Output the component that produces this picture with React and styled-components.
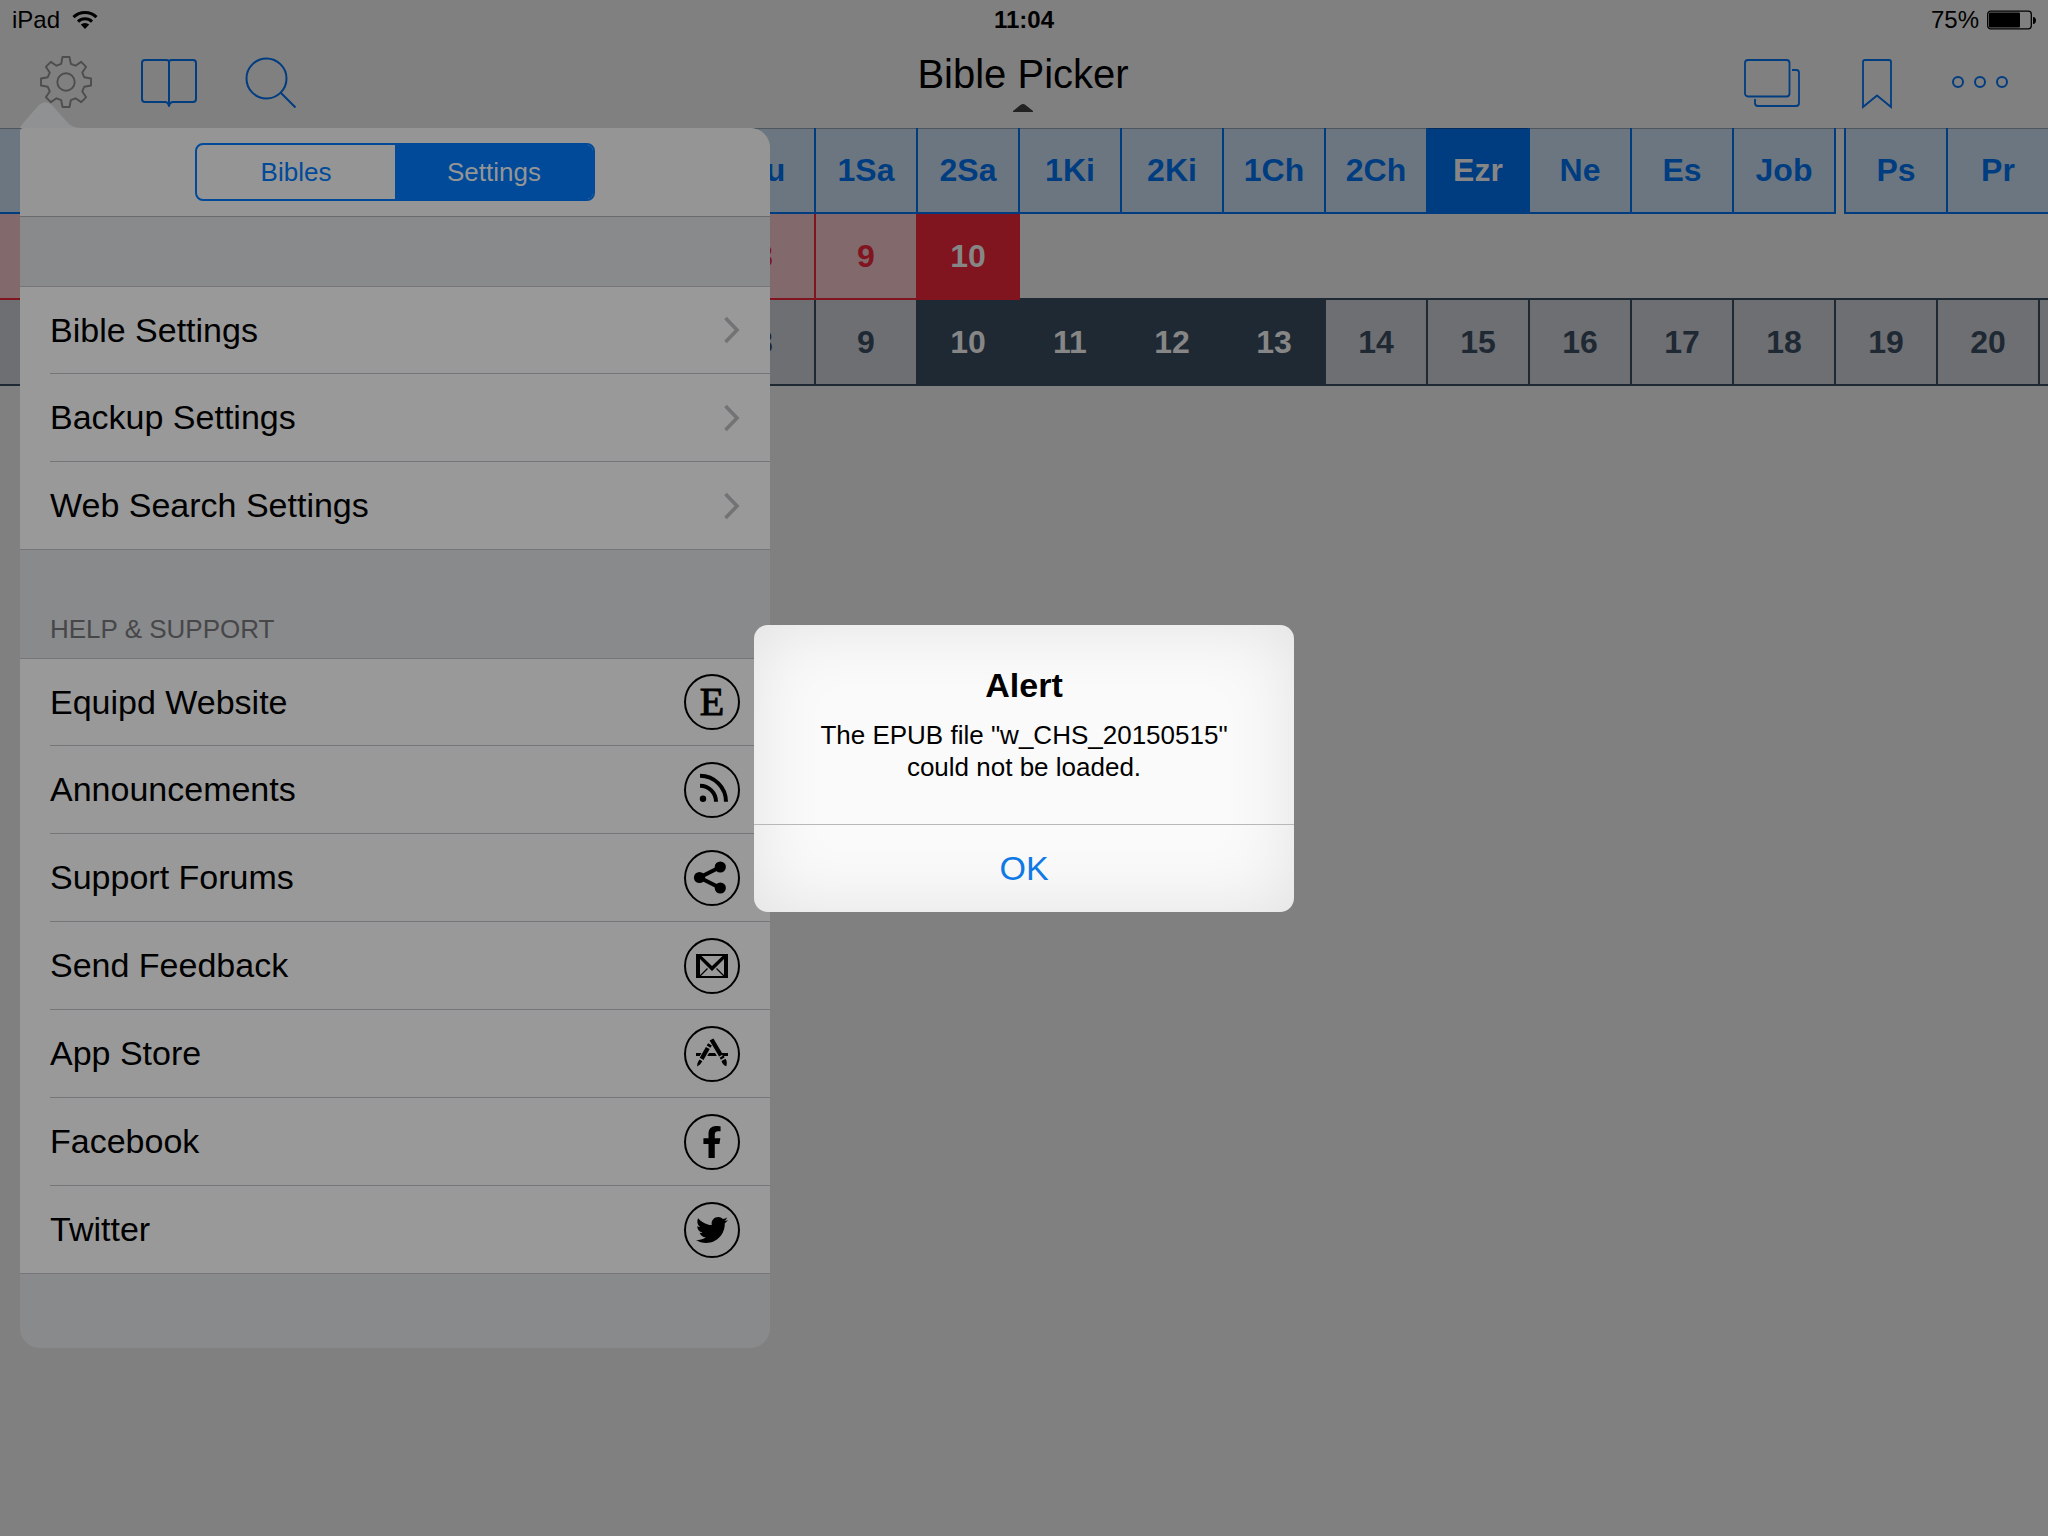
import React from 'react'
import styled, { createGlobalStyle } from 'styled-components'
import { FaFacebookF, FaTwitter } from 'react-icons/fa'

const GlobalStyle=createGlobalStyle`
* {
box-sizing: border-box;
}
body {
margin: 0;
background: #808080;
color: #000;
font-family: "Liberation Sans", Arial, Helvetica, sans-serif;
}
button {
margin: 0;
padding: 0;
border: 0;
background: none;
color: inherit;
font: inherit;
cursor: pointer;
}
`
const Page=styled.div`
position: relative;
min-height: 100vh;
overflow: hidden;
`
const StatusBar=styled.header`
display: grid;
grid-template-columns: 1fr auto 1fr;
align-items: center;
height: 40px;
padding: 0 12px;
font-size: 24px;
`
const StatusSide=styled.div`
display: flex;
align-items: center;
justify-content: ${p => p.$end ? 'flex-end' : 'flex-start'};
gap: ${p => p.$end ? '8px' : '12px'};
`
const Clock=styled.span`
font-weight: bold;
`
const NavBar=styled.nav`
display: grid;
grid-template-columns: 1fr auto 1fr;
align-items: center;
height: 88px;
padding: 0 40px 0 38px;
`
const NavGroup=styled.div`
display: flex;
gap: 47px;
justify-content: ${p => p.$end ? 'flex-end' : 'flex-start'};
`
const NavButton=styled.button`
width: 56px;
height: 56px;
color: ${p => p.$muted ? '#4d4d4d' : '#003c80'};
svg {
display: block;
overflow: visible;
}
`
const TitleButton=styled.button`
display: flex;
flex-direction: column;
align-items: center;
gap: 8px;
align-self: start;
padding-top: 12px;
`
const Title=styled.span`
font-size: 40px;
line-height: 44px;
`

// colours of the three picker rows
const tones={
    book: { fill: '#6c7680', ink: '#003c80' },
    chapter: { fill: '#826a6c', ink: '#80141f' },
    verse: { fill: '#6e6f73', ink: '#1f2933' },
}
const PickerRow=styled.div`
display: flex;
height: 86px;
overflow: hidden;
box-shadow: ${p => p.$top ? 'inset 0 1px #55575c' : 'none'};
`
const CellGroup=styled.div`
display: flex;
flex: none;
margin-right: ${p => p.$gap ? '8px' : '0'};
border-right: ${p => p.$closed ? `2px solid ${tones[p.$tone].ink}` : '0'};
`
const Cell=styled.button`
flex: none;
width: ${p => p.$first ? '100px' : '102px'};
height: 86px;
border-left: ${p => p.$first ? '0' : '2px'} solid ${p => tones[p.$tone].ink};
border-bottom: 2px solid ${p => tones[p.$tone].ink};
background: ${p => p.$on ? tones[p.$tone].ink : tones[p.$tone].fill};
color: ${p => p.$on ? '#868686' : tones[p.$tone].ink};
box-shadow: ${p => p.$tone === 'book' ? 'inset 0 1px rgba(0, 0, 0, 0.28)' : 'none'};
font-size: 32px;
font-weight: bold;
text-align: center;
`
const Filler=styled.div`
flex: 1;
border-bottom: 2px solid #1f2933;
`

const Popover=styled.aside`
position: absolute;
top: 102px;
left: 20px;
width: 750px;
`
const Arrow=styled.svg`
display: block;
`
const Panel=styled.div`
overflow: hidden;
border-radius: 4px 20px 20px 20px;
background: #898a8c;
`
const PanelHead=styled.div`
display: flex;
justify-content: center;
align-items: center;
height: 89px;
border-bottom: 1px solid #6a6a6b;
background: #959595;
`
const Segments=styled.div`
display: flex;
width: 400px;
height: 58px;
border: 2px solid #004a99;
border-radius: 8px;
overflow: hidden;
`
const Segment=styled.button`
flex: 1;
background: ${p => p.$on ? '#004a99' : 'transparent'};
color: ${p => p.$on ? '#959595' : '#004a99'};
font-size: 26px;
`
const Spacer=styled.div`
height: ${p => p.$size}px;
`
const GroupLabel=styled.h2`
display: flex;
align-items: flex-end;
height: 108px;
margin: 0;
padding: 0 30px 14px;
color: #47474a;
font-size: 26px;
font-weight: normal;
line-height: 30px;
`
const List=styled.ul`
margin: 0;
padding: 0;
list-style: none;
border-top: 1px solid #76767a;
border-bottom: 1px solid #76767a;
background: #999;
`
const Item=styled.li`
height: 88px;
margin-left: 30px;
border-bottom: 1px solid #76767a;
&:first-child {
height: 87px;
}
&:last-child {
height: 87px;
border-bottom: 0;
}
`
const ItemLink=styled.a`
display: flex;
align-items: center;
justify-content: space-between;
height: 100%;
padding-right: 30px;
color: #000;
font-size: 34px;
text-decoration: none;
`
const Ring=styled.span`
display: flex;
align-items: center;
justify-content: center;
width: 56px;
height: 56px;
border: 2px solid #000;
border-radius: 50%;
svg {
flex: none;
}
`
const Monogram=styled.span`
font-family: "Liberation Serif", "Times New Roman", serif;
font-size: 40px;
line-height: 52px;
-webkit-text-stroke: 1px #000;
`

const Backdrop=styled.div`
position: fixed;
inset: 0;
display: flex;
align-items: center;
justify-content: center;
`
const AlertBox=styled.div`
width: 540px;
border-radius: 14px;
background: #fafafa;
box-shadow: inset 0 0 70px rgba(0, 0, 0, 0.1);
text-align: center;
`
const AlertText=styled.div`
padding: 40px 48px 41px;
border-bottom: 1px solid #b8b8ba;
`
const AlertTitle=styled.h1`
margin: 0 0 14px;
font-size: 34px;
line-height: 40px;
`
const AlertMessage=styled.p`
margin: 0;
font-size: 26px;
line-height: 32px;
`
const AlertButton=styled.button`
width: 100%;
height: 87px;
color: #0f7ae5;
font-size: 34px;
`

// eight teeth, one every 45 degrees
const gearPath=() => {
    const pts=[]
    for (let i=0; i < 8; i++) {
        const a=i * Math.PI / 4
        const tooth=[[-4.8, -18.2], [-3.5, -25], [3.5, -25], [4.8, -18.2]]
        tooth.forEach(([x, y]) => {
            const px=28 + x * Math.cos(a) - y * Math.sin(a)
            const py=26 + x * Math.sin(a) + y * Math.cos(a)
            pts.push(`${px.toFixed(2)} ${py.toFixed(2)}`)
        })
    }
    return `M${pts.join('L')}Z`
}

const Line=({children, width=2}) => (
    <svg width="56" height="56" viewBox="0 0 56 56" fill="none" stroke="currentColor" strokeWidth={width} strokeLinejoin="round" aria-hidden="true">
        {children}
    </svg>
)
const Glyph=({children}) => (
    <svg width="56" height="56" viewBox="0 0 56 56" aria-hidden="true">{children}</svg>
)

const WifiIcon=() => (
    <svg width="26" height="20" viewBox="0 0 26 20" fill="none" stroke="#000" strokeWidth="3" aria-hidden="true">
        <path d="M1.5 7.2a16.5 16.5 0 0 1 23 0" />
        <path d="M6 11.6a10 10 0 0 1 14 0" />
        <path d="M8.8 14.6a6 6 0 0 1 8.4 0L13 19z" fill="#000" stroke="none" />
    </svg>
)
const BatteryIcon=() => (
    <svg width="49" height="20" viewBox="0 0 49 20" aria-hidden="true">
        <rect x="0.7" y="1.2" width="43.6" height="17.6" rx="3" fill="none" stroke="#000" strokeWidth="1.3" />
        <rect x="2" y="2.6" width="31" height="14.8" rx="1" />
        <path d="M46 7c4 0 4 7 0 7z" />
    </svg>
)
const Chevron=() => (
    <svg width="16" height="28" viewBox="0 0 16 28" fill="none" stroke="#737375" strokeWidth="3.6" aria-hidden="true">
        <path d="M1.5 2L13 14L1.5 26" />
    </svg>
)
const RssIcon=() => (
    <Glyph>
        <circle cx="19" cy="36.7" r="3.2" />
        <g fill="none" stroke="#000" strokeWidth="4">
            <path d="M16 23.7a16 16 0 0 1 16 16" />
            <path d="M16 13.7a26 26 0 0 1 26 26" />
        </g>
    </Glyph>
)
const ShareIcon=() => (
    <Glyph>
        <path d="M36.3 17L15.5 27.5L36.3 38" fill="none" stroke="#000" strokeWidth="4" />
        <circle cx="15.5" cy="27.5" r="5.6" />
        <circle cx="36.3" cy="17" r="5.6" />
        <circle cx="36.3" cy="38" r="5.6" />
    </Glyph>
)
const MailIcon=() => (
    <Glyph>
        <path fillRule="evenodd" d="M12 16H44V40H12zM16 21V38H40V21L28 33zM17.5 18L28 28L38.5 18z" />
        <path d="M16 38L23.5 30.5M40 38L32.5 30.5" stroke="#000" strokeWidth="1.3" />
    </Glyph>
)
const StoreIcon=() => (
    <Glyph>
        <path d="M12 27h5.5l-1.8 3H12zM25 27h6l1.8 3h-9.6zM37.2 27H44v3h-5.2z" />
        <g fill="none" stroke="#000" strokeWidth="4.4">
            <path d="M27.5 13.5L37 29.5" />
            <path d="M37.6 30.5L38.8 32.5" />
            <path d="M26 18.4L24.6 20.7" />
            <path d="M23.8 22L17.6 32.8" />
        </g>
        <path d="M15.4 33.5l3 1.8-2.4 3.2-2.9 1.9.4-3.4zM37.5 35l4-2.2c1.6 2 1.6 4.8.8 7.4-2.3-.7-4.3-2.5-4.8-5.2z" />
    </Glyph>
)

const icons={
    site: <Monogram>E</Monogram>,
    rss: <RssIcon />,
    share: <ShareIcon />,
    mail: <MailIcon />,
    store: <StoreIcon />,
    facebook: <FaFacebookF size={32} />,
    twitter: <FaTwitter size={32} />,
}
const settings=['Bible Settings', 'Backup Settings', 'Web Search Settings']
const support=[
    { label: 'Equipd Website', icon: 'site' },
    { label: 'Announcements', icon: 'rss' },
    { label: 'Support Forums', icon: 'share' },
    { label: 'Send Feedback', icon: 'mail' },
    { label: 'App Store', icon: 'store' },
    { label: 'Facebook', icon: 'facebook' },
    { label: 'Twitter', icon: 'twitter' },
]
const history=['Ge', 'Ex', 'Le', 'Nu', 'De', 'Jos', 'Jg', 'Ru', '1Sa', '2Sa', '1Ki', '2Ki', '1Ch', '2Ch', 'Ezr', 'Ne', 'Es', 'Job']
const poetry=['Ps', 'Pr']
const range=(n) => Array.from({ length: n }, (_, i) => String(i + 1))

// cells behind the popover or past the right edge keep only their accessible name
const Cells=({items, tone, selected=[], start=true, from=0, to=items.length}) => items.map((item, i) => (
    <Cell key={item} aria-label={item} $tone={tone} $first={start && i === 0} $on={selected.includes(item)}>
        {i >= from && i < to ? item : null}
    </Cell>
))

const Picker=() => (
    <main>
        <PickerRow $top>
            <CellGroup $tone="book" $closed $gap><Cells items={history} tone="book" selected={['Ezr']} from={7} /></CellGroup>
            <CellGroup $tone="book"><Cells items={poetry} tone="book" start={false} /></CellGroup>
        </PickerRow>
        <PickerRow>
            <CellGroup $tone="chapter" $closed><Cells items={range(10)} tone="chapter" selected={['10']} from={7} /></CellGroup>
            <Filler />
        </PickerRow>
        <PickerRow>
            <CellGroup $tone="verse"><Cells items={range(21)} tone="verse" selected={['10', '11', '12', '13']} from={7} to={20} /></CellGroup>
        </PickerRow>
    </main>
)

const SettingsPopover=() => (
    <Popover>
        <Arrow width="64" height="26" viewBox="0 0 64 26" aria-hidden="true">
            <path d="M0 26C1 24 2 22.5 4 20L19 3Q25.5-2.5 32 3L47 20Q52 26 62 26z" fill="#8f9193" />
        </Arrow>
        <Panel>
            <PanelHead>
                <Segments>
                    <Segment>Bibles</Segment>
                    <Segment $on>Settings</Segment>
                </Segments>
            </PanelHead>
            <Spacer $size={69} />
            <List>
                {settings.map(label => (
                    <Item key={label}><ItemLink href="#">{label}<Chevron /></ItemLink></Item>
                ))}
            </List>
            <GroupLabel>HELP &amp; SUPPORT</GroupLabel>
            <List>
                {support.map(({label, icon}) => (
                    <Item key={label}><ItemLink href="#">{label}<Ring>{icons[icon]}</Ring></ItemLink></Item>
                ))}
            </List>
            <Spacer $size={74} />
        </Panel>
    </Popover>
)

const App=() => {
    return (<Page>
        <GlobalStyle />
        <StatusBar>
            <StatusSide><span>iPad</span><WifiIcon /></StatusSide>
            <Clock>11:04</Clock>
            <StatusSide $end><span>75%</span><BatteryIcon /></StatusSide>
        </StatusBar>
        <NavBar>
            <NavGroup>
                <NavButton $muted aria-label="Settings">
                    <Line width={1.9}><path d={gearPath()} /><circle cx="28" cy="26" r="8.7" /></Line>
                </NavButton>
                <NavButton aria-label="Library">
                    <Line><path d="M28 5V50M28 5Q27 4 25 4H4Q1 4 1 7V43Q1 46 4 46H24Q27 46 28 50Q29 46 32 46H52Q55 46 55 43V7Q55 4 52 4H31Q29 4 28 5" /></Line>
                </NavButton>
                <NavButton aria-label="Search">
                    <Line><circle cx="22.5" cy="22.5" r="20" /><path d="M36.5 36.5L51.5 51.5" /></Line>
                </NavButton>
            </NavGroup>
            <TitleButton>
                <Title>Bible Picker</Title>
                <svg width="20" height="8" viewBox="0 0 20 8" aria-hidden="true"><path d="M0 8V7L7.5 1Q10-1 12.5 1L20 7V8z" fill="#222" /></svg>
            </TitleButton>
            <NavGroup $end>
                <NavButton aria-label="Windows">
                    <Line width={1.8}><rect x="-1" y="4" width="44.5" height="36.5" rx="3" /><path d="M46 14H50.5Q53 14 53 17V47Q53 50 50 50H12Q9 50 9 47V43" /></Line>
                </NavButton>
                <NavButton aria-label="Bookmarks">
                    <Line width={1.8}><path d="M14 51V6Q14 4 16 4H40Q42 4 42 6V51L28 39.5z" strokeLinejoin="miter" /></Line>
                </NavButton>
                <NavButton aria-label="More">
                    <Line><circle cx="6" cy="26" r="5" /><circle cx="28" cy="26" r="5" /><circle cx="50" cy="26" r="5" /></Line>
                </NavButton>
            </NavGroup>
        </NavBar>
        <Picker />
        <SettingsPopover />
        <Backdrop>
            <AlertBox role="alertdialog" aria-labelledby="alert-title" aria-describedby="alert-message">
                <AlertText>
                    <AlertTitle id="alert-title">Alert</AlertTitle>
                    <AlertMessage id="alert-message">The EPUB file "w_CHS_20150515" could not be loaded.</AlertMessage>
                </AlertText>
                <AlertButton>OK</AlertButton>
            </AlertBox>
        </Backdrop>
    </Page>)
}

export default App
